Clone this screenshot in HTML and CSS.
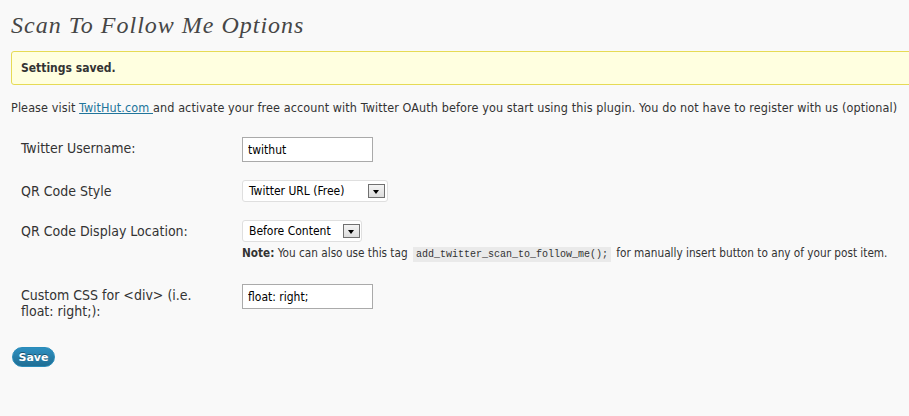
FILE: index.html
```html
<!DOCTYPE html>
<html>
<head>
<meta charset="utf-8">
<title>Scan To Follow Me Options</title>
<link rel="stylesheet" href="styles.css">
</head>
<body>
<div class="wrap">
  <h2 class="title">Scan To Follow Me Options</h2>
  <div class="notice"><strong>Settings saved.</strong></div>
  <p class="intro">Please visit <a href="#">TwitHut.com </a>and activate your free account with Twitter OAuth before you start using this plugin. You do not have to register with us (optional)</p>
  <form class="form">
    <div class="row">
      <div class="label">Twitter Username:</div>
      <div class="field"><input class="text" type="text" value="twithut"></div>
    </div>
    <div class="row">
      <div class="label">QR Code Style</div>
      <div class="field">
        <div class="select select-style"><span class="sel-text">Twitter URL (Free)</span><span class="arrow"></span></div>
      </div>
    </div>
    <div class="row row-note">
      <div class="label">QR Code Display Location:</div>
      <div class="field">
        <div class="select select-loc"><span class="sel-text">Before Content</span><span class="arrow"></span></div>
        <div class="note"><b>Note:</b> You can also use this tag <code>add_twitter_scan_to_follow_me();</code> for manually insert button to any of your post item.</div>
      </div>
    </div>
    <div class="row">
      <div class="label">Custom CSS for &lt;div&gt; (i.e.<br>float: right;):</div>
      <div class="field"><input class="text" type="text" value="float: right;"></div>
    </div>
    <div class="actions"><button type="button" class="save">Save</button></div>
  </form>
</div>
</body>
</html>
```

FILE: styles.css
```css
html, body {
  margin: 0;
  padding: 0;
  background: #f9f9f9;
  overflow: hidden;
}
body {
  font-family: "DejaVu Sans Condensed", "DejaVu Sans", sans-serif;
  font-stretch: condensed;
  color: #333;
}
.wrap {
  padding-left: 11px;
  margin-right: -20px;
}
.title {
  margin: 0;
  padding-top: 11px;
  font-family: "Liberation Serif", serif;
  font-style: italic;
  font-weight: normal;
  font-size: 24px;
  line-height: 29px;
  letter-spacing: 1px;
  color: #464646;
}
.notice {
  margin-top: 11px;
  background: #ffffe0;
  border: 1px solid #e6db55;
  border-radius: 3px;
  padding: 7px 9px;
  font-size: 12px;
  line-height: 18px;
}
.notice strong {
  font-weight: bold;
}
.intro {
  margin: 14px 0 0 0;
  font-size: 12.5px;
  line-height: 18px;
  letter-spacing: 0.1px;
}
.intro a {
  color: #21759b;
  text-decoration: underline;
}
.form {
  margin-top: 20px;
}
.row {
  display: grid;
  grid-template-columns: 231px 1fr;
  margin-bottom: 18px;
}
.label {
  padding-left: 10px;
  padding-top: 3px;
  font-size: 14px;
  line-height: 16px;
}
.text {
  display: block;
  box-sizing: border-box;
  width: 131px;
  height: 25px;
  margin: 0;
  padding: 0 5px;
  border: 1px solid #aaa;
  background: #fff;
  font-family: "DejaVu Sans Condensed", "DejaVu Sans", sans-serif;
  font-stretch: condensed;
  font-size: 12px;
  color: #000;
  outline: none;
}
.select {
  box-sizing: border-box;
  height: 22px;
  border: 1px solid #dfdfdf;
  border-radius: 3px;
  background: #fff;
  display: flex;
  align-items: center;
  justify-content: space-between;
  padding: 0 2px 0 6px;
  font-size: 12px;
  color: #000;
}
.select-style {
  width: 146px;
}
.select-loc {
  width: 120px;
  padding-right: 1px;
}
.arrow {
  box-sizing: border-box;
  width: 17px;
  height: 14px;
  border: 1px solid #707070;
  background: linear-gradient(#f4f4f4, #dcdcdc);
  position: relative;
}
.arrow::after {
  content: "";
  position: absolute;
  left: 4px;
  top: 5px;
  border-left: 3.5px solid transparent;
  border-right: 3.5px solid transparent;
  border-top: 4px solid #000;
}
.row-note {
  margin-bottom: 20px;
}
.note {
  margin-top: 2px;
  font-size: 11.7px;
  line-height: 18px;
  white-space: nowrap;
}
.note b {
  font-weight: bold;
}
.note code {
  font-family: "Liberation Mono", monospace;
  font-size: 10px;
  background: #eaeaea;
  padding: 2px 3px;
  margin: 0 2px;
  color: #333;
}
.actions {
  margin-top: 28px;
  padding-left: 1px;
}
.save {
  display: block;
  width: 43px;
  height: 20px;
  padding: 0;
  border: 1px solid #298cba;
  border-radius: 11px;
  background: linear-gradient(#2e8fbf, #1f6e94);
  color: #fff;
  font-family: "DejaVu Sans", sans-serif;
  font-weight: bold;
  font-size: 11px;
  text-shadow: 0 -1px 0 rgba(0, 0, 0, 0.4);
}
```
